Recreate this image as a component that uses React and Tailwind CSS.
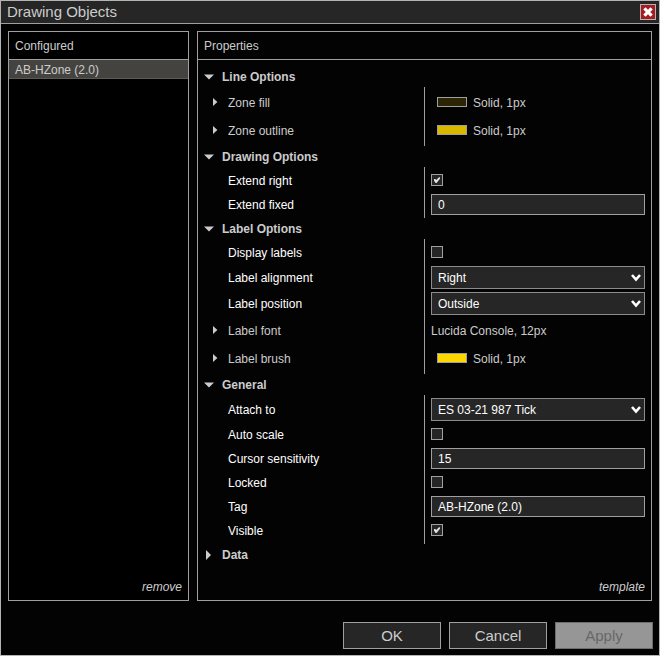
import React, { useId, useState } from "react";

function Expander({ open, small }) {
  if (open) {
    return (
      <svg width="10" height="6" viewBox="0 0 10 6" aria-hidden="true">
        <path d="M0 0.5h10L5 5.5z" fill="#cccccc" />
      </svg>
    );
  }
  return small ? (
    <svg width="5" height="8" viewBox="0 0 5 8" aria-hidden="true">
      <path d="M0 0v8L4.4 4z" fill="#cccccc" />
    </svg>
  ) : (
    <svg width="5" height="10" viewBox="0 0 5 10" aria-hidden="true">
      <path d="M0 0v10L5 5z" fill="#cccccc" />
    </svg>
  );
}

function Section({ title, defaultOpen = true, children }) {
  const [open, setOpen] = useState(defaultOpen);
  return (
    <section>
      <h2>
        <button
          type="button"
          aria-expanded={open}
          onClick={() => setOpen(!open)}
          className="flex h-[21px] items-center pl-1.5 font-bold text-[#cccccc]"
        >
          <span className={open ? "w-[18px]" : "w-[18px] pl-0.5"}>
            <Expander open={open} />
          </span>
          {title}
        </button>
      </h2>
      {open && children && (
        <div>
          <div className="ml-[226px] h-px border-l border-[#a0a0a0]" />
          {children}
          <div className="ml-[226px] h-0.5 border-l border-[#a0a0a0]" />
        </div>
      )}
    </section>
  );
}

function Value({ className, children }) {
  return (
    <div className={`min-w-0 flex-1 border-l border-[#a0a0a0] pl-1.5 ${className}`}>
      {children}
    </div>
  );
}

function FieldLabel({ htmlFor, children }) {
  return (
    <label htmlFor={htmlFor} className="flex w-[226px] shrink-0 items-center pt-0.5 pl-[30px] text-white">
      {children}
    </label>
  );
}

function ExpandRow({ label, color, value }) {
  return (
    <div className="flex h-7">
      <button type="button" aria-expanded="false" className="flex w-[226px] shrink-0 items-center pl-[15px]">
        <span className="w-[15px]">
          <Expander small />
        </span>
        <span className="pt-0.5">{label}</span>
      </button>
      <Value className="flex items-center gap-1.5">
        {color && <span className={`ml-1.5 h-2.5 w-[30px] border border-[#a0a0a0] ${color}`} />}
        <span className="pt-0.5">{value}</span>
      </Value>
    </div>
  );
}

function CheckRow({ label, checked = false }) {
  const id = useId();
  const [on, setOn] = useState(checked);
  return (
    <div className="flex h-6">
      <FieldLabel htmlFor={id}>{label}</FieldLabel>
      <Value className="flex items-center">
        <span className="relative flex">
          <input
            id={id}
            type="checkbox"
            checked={on}
            onChange={(e) => setOn(e.target.checked)}
            className="size-3 appearance-none border border-[#a0a0a0] bg-[#262626]"
          />
          {on && (
            <svg className="pointer-events-none absolute inset-0" width="12" height="12" viewBox="0 0 12 12" aria-hidden="true">
              <path d="M3 5h1.4l0.8 1L8 3.2h1v1.6L5.6 9H4.6L3 6.8z" fill="#e0e0e0" />
            </svg>
          )}
        </span>
      </Value>
    </div>
  );
}

function TextRow({ label, value }) {
  const id = useId();
  return (
    <div className="flex h-6">
      <FieldLabel htmlFor={id}>{label}</FieldLabel>
      <Value className="pt-0.5 pr-1.5">
        <input
          id={id}
          type="text"
          defaultValue={value}
          className="block h-[21px] w-full border border-[#a0a0a0] bg-[#262626] px-1.5 text-white outline-none"
        />
      </Value>
    </div>
  );
}

function SelectRow({ label, options }) {
  const id = useId();
  return (
    <div className="flex h-[26px]">
      <FieldLabel htmlFor={id}>{label}</FieldLabel>
      <Value className="pt-0.5 pr-1.5">
        <div className="relative">
          <select
            id={id}
            className="block h-[23px] w-full appearance-none border border-[#8c8c8c] bg-[#262626] px-1.5 text-white outline-none"
          >
            {options.map((o) => (
              <option key={o}>{o}</option>
            ))}
          </select>
          <svg className="pointer-events-none absolute top-2 right-1" width="10" height="8" viewBox="0 0 10 8" aria-hidden="true">
            <path d="M1 1l4 4.6L9 1" fill="none" stroke="#ffffff" strokeWidth="2.6" />
          </svg>
        </div>
      </Value>
    </div>
  );
}

const dialogButton =
  "h-[27px] w-[98px] border border-[#a0a0a0] bg-[#262626] text-[15px] leading-5 text-[#cccccc]";

export default function App() {
  return (
    <main className="flex min-h-screen flex-col border border-[#b4b4b4] bg-[#030303] font-['Liberation_Sans',Arial,sans-serif] text-xs text-[#cccccc]">
      <header className="flex h-[23px] shrink-0 items-center justify-between border-b border-[#a0a0a0] bg-[#262626] pr-[3px] pl-1.5">
        <h1 className="text-[15px] leading-5">Drawing Objects</h1>
        <button
          type="button"
          aria-label="Close"
          className="flex size-4 items-center justify-center border border-[#b4b4b4] bg-[#a51c20]"
        >
          <svg width="10" height="10" viewBox="0 0 10 10" aria-hidden="true">
            <path d="M1.4 1.4l7.2 7.2M8.6 1.4L1.4 8.6" stroke="#ffffff" strokeWidth="3.2" />
          </svg>
        </button>
      </header>

      <div className="flex flex-1 gap-2 px-[7px] pt-[7px]">
        <section className="flex w-[181px] shrink-0 flex-col border border-[#a0a0a0] bg-black">
          <h2 className="flex h-7 items-center border-b border-[#a0a0a0] pl-1.5">Configured</h2>
          <ul className="flex-1">
            <li>
              <button
                type="button"
                className="flex h-[19px] w-full items-center border-b border-[#5c5a57] bg-[#454340] pt-0.5 pl-1.5"
              >
                AB-HZone (2.0)
              </button>
            </li>
          </ul>
          <a href="#remove" className="self-end pr-1.5 pb-[5px] italic">
            remove
          </a>
        </section>

        <section className="flex min-w-0 flex-1 flex-col border border-[#a0a0a0]">
          <h2 className="flex h-7 items-center border-b border-[#a0a0a0] pl-1.5">Properties</h2>
          <div className="flex-1 pt-1.5">
            <Section title="Line Options">
              <ExpandRow label="Zone fill" color="bg-[#2b2505]" value="Solid, 1px" />
              <ExpandRow label="Zone outline" color="bg-[#d9b800]" value="Solid, 1px" />
            </Section>
            <Section title="Drawing Options">
              <CheckRow label="Extend right" checked />
              <TextRow label="Extend fixed" value="0" />
            </Section>
            <Section title="Label Options">
              <CheckRow label="Display labels" />
              <SelectRow label="Label alignment" options={["Right", "Left", "Center"]} />
              <SelectRow label="Label position" options={["Outside", "Inside"]} />
              <ExpandRow label="Label font" value="Lucida Console, 12px" />
              <ExpandRow label="Label brush" color="bg-[#ffd700]" value="Solid, 1px" />
            </Section>
            <Section title="General">
              <SelectRow label="Attach to" options={["ES 03-21 987 Tick"]} />
              <CheckRow label="Auto scale" />
              <TextRow label="Cursor sensitivity" value="15" />
              <CheckRow label="Locked" />
              <TextRow label="Tag" value="AB-HZone (2.0)" />
              <CheckRow label="Visible" checked />
            </Section>
            <Section title="Data" defaultOpen={false} />
          </div>
          <a href="#template" className="self-end pr-1.5 pb-[5px] italic">
            template
          </a>
        </section>
      </div>

      <footer className="flex justify-end gap-2 px-1.5 pt-[21px] pb-1.5">
        <button type="button" className={dialogButton}>
          OK
        </button>
        <button type="button" className={dialogButton}>
          Cancel
        </button>
        <button
          type="button"
          disabled
          className="h-[27px] w-[98px] border border-[#6e6e6e] bg-[#969696] text-[15px] leading-5 text-[#686868]"
        >
          Apply
        </button>
      </footer>
    </main>
  );
}
